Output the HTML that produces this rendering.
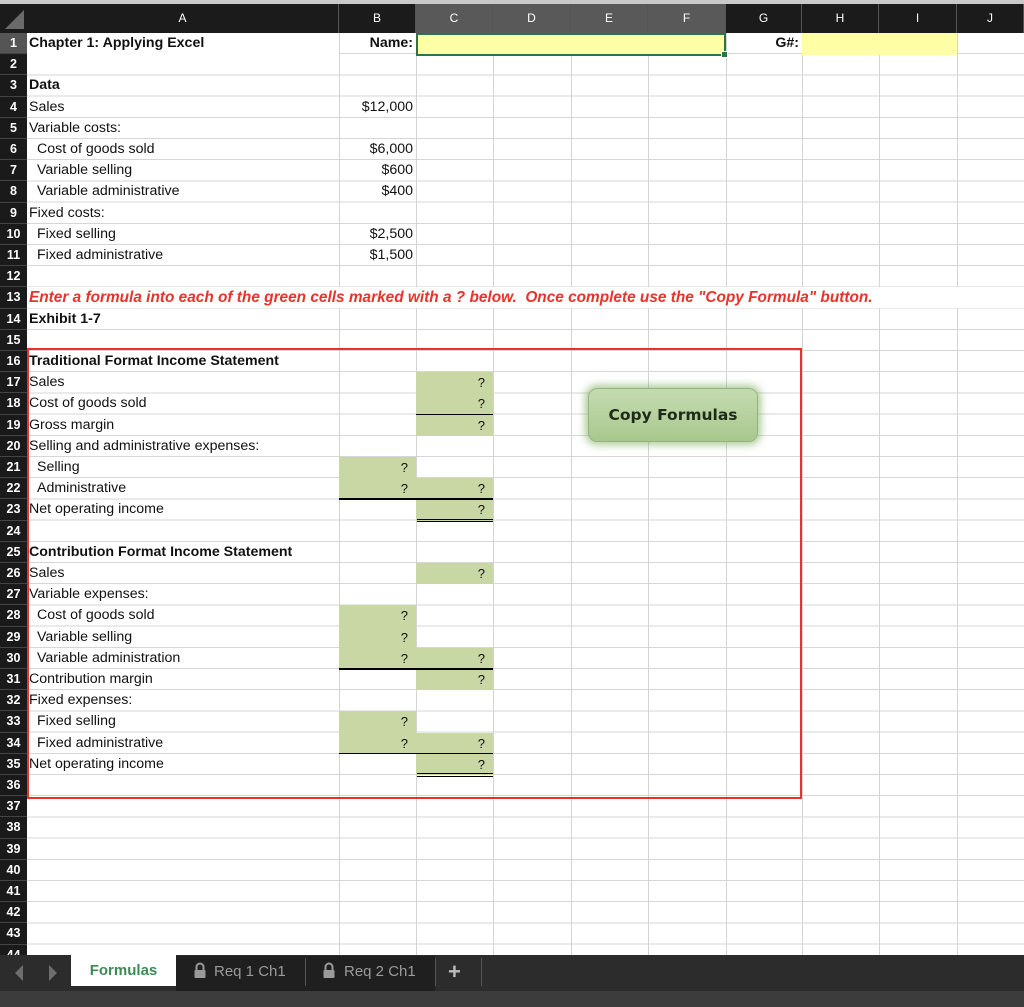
<!DOCTYPE html>
<html><head><meta charset="utf-8"><style>
*{margin:0;padding:0;box-sizing:border-box}
body{width:1024px;height:1007px;position:relative;overflow:hidden;background:#fff;font-family:"Liberation Sans",Arial,sans-serif;font-size:14.2px;color:#111}
.a{position:absolute}
.t{position:absolute;height:21.2px;line-height:21.2px;white-space:nowrap}
.b{font-weight:bold}
.r{text-align:right;padding-right:3px}
.rn{position:absolute;left:0;width:27px;height:21.2px;line-height:21px;color:#fff;font-weight:bold;font-size:12.5px;text-align:center;background:#1a1a1a;border-bottom:1px solid #444}
.ch{position:absolute;top:4px;height:29px;line-height:29px;color:#fff;font-size:12px;text-align:center;border-right:1px solid #555}
.v{position:absolute;top:33px;height:922px;width:1px;background:#d4d4d4}
.g{position:absolute;background:#c9d7a4;height:21.2px}
.q{position:absolute;height:21.2px;line-height:21.2px;text-align:right;padding-right:8px;font-size:13px}
.ul{position:absolute;height:1.5px;background:#000}
</style></head><body>
<div class="a" style="left:0;top:0;width:1024px;height:4px;background:#c9c9c9"></div>
<div class="a" style="left:0;top:4px;width:1024px;height:29px;background:#1b1b1b"></div>
<div class="a" style="left:416px;top:4px;width:310px;height:29px;background:#595959"></div>
<svg class="a" style="left:0;top:4px" width="27" height="29"><polygon points="5,25 24,6 24,25" fill="#6a6a6a"/></svg>
<div class="ch" style="left:27px;width:312px">A</div>
<div class="ch" style="left:339px;width:77px">B</div>
<div class="ch" style="left:416px;width:77px">C</div>
<div class="ch" style="left:493px;width:78px">D</div>
<div class="ch" style="left:571px;width:77px">E</div>
<div class="ch" style="left:648px;width:78px">F</div>
<div class="ch" style="left:726px;width:76px">G</div>
<div class="ch" style="left:802px;width:77px">H</div>
<div class="ch" style="left:879px;width:78px">I</div>
<div class="ch" style="left:957px;width:67px">J</div>

<div class="a" style="left:27px;top:33px;width:997px;height:922px;background:repeating-linear-gradient(to bottom,transparent 0,transparent 20.2px,#d6d6d6 20.2px,#d6d6d6 21.2px)"></div>
<div class="v" style="left:339px"></div><div class="v" style="left:416px"></div><div class="v" style="left:493px"></div><div class="v" style="left:571px"></div><div class="v" style="left:648px"></div><div class="v" style="left:726px"></div><div class="v" style="left:802px"></div><div class="v" style="left:879px"></div><div class="v" style="left:957px"></div>
<div class="a" style="left:27px;top:33px;width:312px;height:21px;background:#fff"></div>
<div class="a" style="left:27px;top:287.4px;width:997px;height:20.2px;background:#fff"></div>
<div class="a" style="left:27px;top:308.6px;width:312px;height:20.2px;background:#fff"></div>
<div class="a" style="left:27px;top:351px;width:312px;height:20.2px;background:#fff"></div>
<div class="a" style="left:27px;top:541.8px;width:312px;height:20.2px;background:#fff"></div>
<div class="a" style="left:27px;top:435.8px;width:312px;height:20.2px;background:#fff"></div>

<div class="a" style="left:0;top:33px;width:27px;height:922px;background:#1a1a1a"></div>
<div class="rn" style="top:33px;background:#555">1</div><div class="rn" style="top:54.2px">2</div><div class="rn" style="top:75.4px">3</div><div class="rn" style="top:96.6px">4</div><div class="rn" style="top:117.8px">5</div><div class="rn" style="top:139px">6</div><div class="rn" style="top:160.2px">7</div><div class="rn" style="top:181.4px">8</div><div class="rn" style="top:202.6px">9</div><div class="rn" style="top:223.8px">10</div><div class="rn" style="top:245px">11</div><div class="rn" style="top:266.2px">12</div><div class="rn" style="top:287.4px">13</div><div class="rn" style="top:308.6px">14</div><div class="rn" style="top:329.8px">15</div><div class="rn" style="top:351px">16</div><div class="rn" style="top:372.2px">17</div><div class="rn" style="top:393.4px">18</div><div class="rn" style="top:414.6px">19</div><div class="rn" style="top:435.8px">20</div><div class="rn" style="top:457px">21</div><div class="rn" style="top:478.2px">22</div><div class="rn" style="top:499.4px">23</div><div class="rn" style="top:520.6px">24</div><div class="rn" style="top:541.8px">25</div><div class="rn" style="top:563px">26</div><div class="rn" style="top:584.2px">27</div><div class="rn" style="top:605.4px">28</div><div class="rn" style="top:626.6px">29</div><div class="rn" style="top:647.8px">30</div><div class="rn" style="top:669px">31</div><div class="rn" style="top:690.2px">32</div><div class="rn" style="top:711.4px">33</div><div class="rn" style="top:732.6px">34</div><div class="rn" style="top:753.8px">35</div><div class="rn" style="top:775px">36</div><div class="rn" style="top:796.2px">37</div><div class="rn" style="top:817.4px">38</div><div class="rn" style="top:838.6px">39</div><div class="rn" style="top:859.8px">40</div><div class="rn" style="top:881px">41</div><div class="rn" style="top:902.2px">42</div><div class="rn" style="top:923.4px">43</div><div class="rn" style="top:944.6px">44</div>

<div class="t b" style="left:29px;top:33px">Chapter 1: Applying Excel</div>
<div class="t b r" style="left:339px;top:33px;width:77px">Name:</div>
<div class="a" style="left:416px;top:33px;width:310px;height:23px;background:#ffffa6;border:2px solid #2e7345"></div>
<div class="a" style="left:721px;top:51px;width:7px;height:7px;background:#2e7345;border:1px solid #fff"></div>
<div class="t b r" style="left:726px;top:33px;width:76px">G#:</div>
<div class="a" style="left:802px;top:33px;width:155px;height:22px;background:#ffffa6"></div>

<div class="t b" style="left:29px;top:75.4px">Data</div>
<div class="t" style="left:29px;top:96.6px">Sales</div><div class="t r" style="left:339px;top:96.6px;width:77px">$12,000</div>
<div class="t" style="left:29px;top:117.8px">Variable costs:</div>
<div class="t" style="left:37px;top:139px">Cost of goods sold</div><div class="t r" style="left:339px;top:139px;width:77px">$6,000</div>
<div class="t" style="left:37px;top:160.2px">Variable selling</div><div class="t r" style="left:339px;top:160.2px;width:77px">$600</div>
<div class="t" style="left:37px;top:181.4px">Variable administrative</div><div class="t r" style="left:339px;top:181.4px;width:77px">$400</div>
<div class="t" style="left:29px;top:202.6px">Fixed costs:</div>
<div class="t" style="left:37px;top:223.8px">Fixed selling</div><div class="t r" style="left:339px;top:223.8px;width:77px">$2,500</div>
<div class="t" style="left:37px;top:245px">Fixed administrative</div><div class="t r" style="left:339px;top:245px;width:77px">$1,500</div>
<div class="t b" style="left:29px;top:287.4px;color:#e8332a;font-style:italic;font-size:15.4px">Enter a formula into each of the green cells marked with a ? below.&nbsp; Once complete use the "Copy Formula" button.</div>
<div class="t b" style="left:29px;top:308.6px">Exhibit 1-7</div>

<div class="g" style="left:416px;top:372.2px;width:77px;height:63.6px"></div>
<div class="g" style="left:339px;top:457px;width:77px;height:42.4px"></div>
<div class="g" style="left:416px;top:478.2px;width:77px;height:42.4px"></div>
<div class="g" style="left:416px;top:563px;width:77px"></div>
<div class="g" style="left:339px;top:605.4px;width:77px;height:63.6px"></div>
<div class="g" style="left:416px;top:647.8px;width:77px;height:42.4px"></div>
<div class="g" style="left:339px;top:711.4px;width:77px;height:42.4px"></div>
<div class="g" style="left:416px;top:732.6px;width:77px;height:42.4px"></div>

<div class="t b" style="left:29px;top:351px">Traditional Format Income Statement</div>
<div class="t" style="left:29px;top:372.2px">Sales</div><div class="q" style="left:416px;top:372.2px;width:77px">?</div>
<div class="t" style="left:29px;top:393.4px">Cost of goods sold</div><div class="q" style="left:416px;top:393.4px;width:77px">?</div>
<div class="t" style="left:29px;top:414.6px">Gross margin</div><div class="q" style="left:416px;top:414.6px;width:77px">?</div>
<div class="t" style="left:29px;top:435.8px">Selling and administrative expenses:</div>
<div class="t" style="left:37px;top:457px">Selling</div><div class="q" style="left:339px;top:457px;width:77px">?</div>
<div class="t" style="left:37px;top:478.2px">Administrative</div><div class="q" style="left:339px;top:478.2px;width:77px">?</div><div class="q" style="left:416px;top:478.2px;width:77px">?</div>
<div class="t" style="left:29px;top:499.4px">Net operating income</div><div class="q" style="left:416px;top:499.4px;width:77px">?</div>
<div class="t b" style="left:29px;top:541.8px">Contribution Format Income Statement</div>
<div class="t" style="left:29px;top:563px">Sales</div><div class="q" style="left:416px;top:563px;width:77px">?</div>
<div class="t" style="left:29px;top:584.2px">Variable expenses:</div>
<div class="t" style="left:37px;top:605.4px">Cost of goods sold</div><div class="q" style="left:339px;top:605.4px;width:77px">?</div>
<div class="t" style="left:37px;top:626.6px">Variable selling</div><div class="q" style="left:339px;top:626.6px;width:77px">?</div>
<div class="t" style="left:37px;top:647.8px">Variable administration</div><div class="q" style="left:339px;top:647.8px;width:77px">?</div><div class="q" style="left:416px;top:647.8px;width:77px">?</div>
<div class="t" style="left:29px;top:669px">Contribution margin</div><div class="q" style="left:416px;top:669px;width:77px">?</div>
<div class="t" style="left:29px;top:690.2px">Fixed expenses:</div>
<div class="t" style="left:37px;top:711.4px">Fixed selling</div><div class="q" style="left:339px;top:711.4px;width:77px">?</div>
<div class="t" style="left:37px;top:732.6px">Fixed administrative</div><div class="q" style="left:339px;top:732.6px;width:77px">?</div><div class="q" style="left:416px;top:732.6px;width:77px">?</div>
<div class="t" style="left:29px;top:753.8px">Net operating income</div><div class="q" style="left:416px;top:753.8px;width:77px">?</div>

<div class="ul" style="left:416px;top:413.5px;width:77px"></div>
<div class="ul" style="left:339px;top:498.4px;width:154px"></div>
<div class="ul" style="left:417px;top:518.5px;width:76px;height:1px"></div><div class="ul" style="left:417px;top:521px;width:76px;height:1px"></div>
<div class="ul" style="left:339px;top:668px;width:154px"></div>
<div class="ul" style="left:339px;top:752.6px;width:154px"></div>
<div class="ul" style="left:417px;top:773px;width:76px;height:1px"></div><div class="ul" style="left:417px;top:775.5px;width:76px;height:1px"></div>

<div class="a" style="left:27px;top:348px;width:775px;height:451px;border:2px solid #e8332a"></div>

<div class="a" style="left:588px;top:388px;width:170px;height:54px;border-radius:9px;background:linear-gradient(#c4dbb0,#a9c88e);border:1px solid #93b57a;box-shadow:0 0 8px 3px rgba(120,170,90,.6);text-align:center;line-height:52px;font-weight:bold;font-size:15.5px;color:#1f2a1a;font-family:'DejaVu Sans',sans-serif">Copy Formulas</div>

<div class="a" style="left:0;top:955px;width:1024px;height:36px;background:#2c2c2c"></div>
<div class="a" style="left:0;top:991px;width:1024px;height:16px;background:#3c3c3c"></div>
<svg class="a" style="left:14px;top:964px" width="50" height="18"><polygon points="9,1 1,9 9,17" fill="#6d6d6d"/><polygon points="35,1 43,9 35,17" fill="#6d6d6d"/></svg>
<div class="a" style="left:71px;top:955px;width:105px;height:31px;background:#fff;color:#3e8a55;font-weight:bold;font-size:15px;text-align:center;line-height:32px">Formulas</div>
<div class="a" style="left:176px;top:956px;width:259px;height:35px;background:#1f1f1f"></div>
<div class="a" style="left:305px;top:958px;width:1px;height:28px;background:#555"></div>
<div class="a" style="left:435px;top:958px;width:1px;height:28px;background:#555"></div>
<div class="a" style="left:481px;top:958px;width:1px;height:28px;background:#555"></div>
<svg class="a" style="left:194px;top:962px" width="12" height="17"><path d="M2.5,8 V5 a3.5,3.5 0 0 1 7,0 V8" fill="none" stroke="#9a9a9a" stroke-width="2"/><rect x="0.5" y="8" width="11" height="8" rx="1" fill="#9a9a9a"/></svg>
<div class="a" style="left:214px;top:955px;color:#9a9a9a;font-size:15px;line-height:33px">Req 1 Ch1</div>
<svg class="a" style="left:323px;top:962px" width="12" height="17"><path d="M2.5,8 V5 a3.5,3.5 0 0 1 7,0 V8" fill="none" stroke="#9a9a9a" stroke-width="2"/><rect x="0.5" y="8" width="11" height="8" rx="1" fill="#9a9a9a"/></svg>
<div class="a" style="left:344px;top:955px;color:#9a9a9a;font-size:15px;line-height:33px">Req 2 Ch1</div>
<div class="a" style="left:448px;top:955px;color:#bbb;font-size:22px;font-weight:bold;line-height:33px">+</div>
</body></html>
